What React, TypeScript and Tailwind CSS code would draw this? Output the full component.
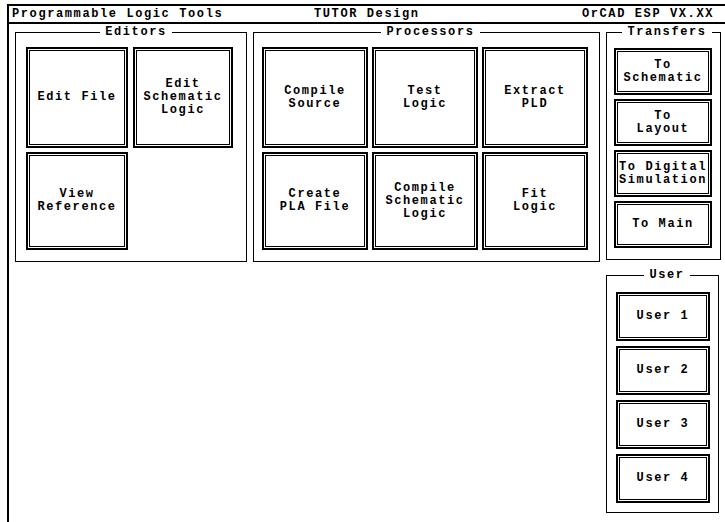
import React from 'react';

interface ToolButtonProps {
  lines: string[];
  className?: string;
}

// double-ruled push button, old DOS style
const ToolButton: React.FC<ToolButtonProps> = ({ lines, className }) => (
  <div className={`border-2 border-black p-[1px] bg-white ${className ?? ''}`}>
    <div className="h-full w-full border border-black flex flex-col items-center justify-center overflow-hidden text-center leading-[13px] whitespace-nowrap">
      {lines.map((line) => (
        <span key={line}>{line}</span>
      ))}
    </div>
  </div>
);

interface GroupProps {
  title: string;
  className?: string;
  children: React.ReactNode;
}

const Group: React.FC<GroupProps> = ({ title, className, children }) => (
  <fieldset className={`border border-black ${className ?? ''}`}>
    <legend className="mx-auto px-[5px] leading-[14px]">{title}</legend>
    {children}
  </fieldset>
);

const processors = [
  ['Compile', 'Source'],
  ['Test', 'Logic'],
  ['Extract', 'PLD'],
  ['Create', 'PLA File'],
  ['Compile', 'Schematic', 'Logic'],
  ['Fit', 'Logic'],
];

const transfers = [
  ['To', 'Schematic'],
  ['To', 'Layout'],
  ['To Digital', 'Simulation'],
  ['To Main'],
];

const users = ['User 1', 'User 2', 'User 3', 'User 4'];

export default function App() {
  return (
    <div className="w-[725px] h-[522px] overflow-hidden bg-white pt-[4px] pl-[7px] font-['Liberation_Mono',monospace] text-[12px] font-bold tracking-[1.6px] text-black">
      <div className="h-full border-l-2 border-t-2 border-black flex flex-col">
        {/* Title bar */}
        <div className="h-[18px] border-b-2 border-black flex items-center">
          <span className="w-[305px] pl-[3px]">Programmable Logic Tools</span>
          <span>TUTOR Design</span>
          <span className="flex-1 text-right pr-[11px]">OrCAD ESP VX.XX</span>
        </div>

        <div className="flex gap-[6px] pl-[6px] pt-[1px]">
          {/* Editors */}
          <Group title="Editors" className="w-[232px] h-[237px] pl-[10px] pt-[8px]">
            <div className="grid grid-cols-[102px_100px] gap-x-[5px] gap-y-[4px]">
              <ToolButton lines={['Edit File']} className="h-[101px]" />
              <ToolButton lines={['Edit', 'Schematic', 'Logic']} className="h-[101px]" />
              <ToolButton lines={['View', 'Reference']} className="h-[98px]" />
            </div>
          </Group>

          {/* Processors */}
          <Group title="Processors" className="w-[347px] h-[237px] pl-[8px] pt-[8px]">
            <div className="grid grid-cols-[106px_106px_106px] grid-rows-[101px_98px] gap-x-[4px] gap-y-[4px]">
              {processors.map((p) => (
                <ToolButton key={p.join(' ')} lines={p} />
              ))}
            </div>
          </Group>

          {/* Right column */}
          <div className="flex flex-col gap-[8px]">
            <Group title="Transfers" className="w-[115px] h-[235px] pl-[7px] pt-[9px]">
              <div className="flex flex-col gap-[4px]">
                {transfers.map((t) => (
                  <ToolButton key={t.join(' ')} lines={t} className="w-[98px] h-[47px]" />
                ))}
              </div>
            </Group>

            <Group title="User" className="w-[113px] h-[245px] pl-[9px] pt-[10px]">
              <div className="flex flex-col gap-[5px]">
                {users.map((u) => (
                  <ToolButton key={u} lines={[u]} className="w-[94px] h-[49px]" />
                ))}
              </div>
            </Group>
          </div>
        </div>
      </div>
    </div>
  );
}
